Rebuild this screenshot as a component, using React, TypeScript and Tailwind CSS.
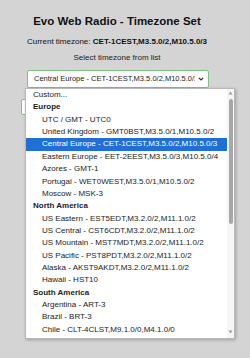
import React from 'react'

type Row = { label: string; kind: 'plain' | 'group' | 'opt'; selected?: boolean }

const rows: Row[] = [
  { label: 'Custom...', kind: 'plain' },
  { label: 'Europe', kind: 'group' },
  { label: 'UTC / GMT - UTC0', kind: 'opt' },
  { label: 'United Kingdom - GMT0BST,M3.5.0/1,M10.5.0/2', kind: 'opt' },
  { label: 'Central Europe - CET-1CEST,M3.5.0/2,M10.5.0/3', kind: 'opt', selected: true },
  { label: 'Eastern Europe - EET-2EEST,M3.5.0/3,M10.5.0/4', kind: 'opt' },
  { label: 'Azores - GMT-1', kind: 'opt' },
  { label: 'Portugal - WET0WEST,M3.5.0/1,M10.5.0/2', kind: 'opt' },
  { label: 'Moscow - MSK-3', kind: 'opt' },
  { label: 'North America', kind: 'group' },
  { label: 'US Eastern - EST5EDT,M3.2.0/2,M11.1.0/2', kind: 'opt' },
  { label: 'US Central - CST6CDT,M3.2.0/2,M11.1.0/2', kind: 'opt' },
  { label: 'US Mountain - MST7MDT,M3.2.0/2,M11.1.0/2', kind: 'opt' },
  { label: 'US Pacific - PST8PDT,M3.2.0/2,M11.1.0/2', kind: 'opt' },
  { label: 'Alaska - AKST9AKDT,M3.2.0/2,M11.1.0/2', kind: 'opt' },
  { label: 'Hawaii - HST10', kind: 'opt' },
  { label: 'South America', kind: 'group' },
  { label: 'Argentina - ART-3', kind: 'opt' },
  { label: 'Brazil - BRT-3', kind: 'opt' },
  { label: 'Chile - CLT-4CLST,M9.1.0/0,M4.1.0/0', kind: 'opt' },
]

function DropdownList() {
  return (
    <div className="absolute left-[25px] top-[88px] w-[210px] h-[251px] bg-white border border-[#b8b8b8] shadow-[1px_1px_3px_rgba(0,0,0,0.25)] overflow-hidden">
      <div className="flex flex-col">
        {rows.map((r, i) => (
          <div
            key={i}
            className={
              'h-[12.37px] leading-[12.37px] whitespace-nowrap text-[8px] mr-[7px] ' +
              (r.kind === 'group' ? 'font-bold pl-[7px] ' : r.kind === 'opt' ? 'pl-[16px] ' : 'pl-[7px] ') +
              (r.selected ? 'bg-[#1f6fd6] text-white' : 'text-[#222]')
            }
          >
            {r.label}
          </div>
        ))}
      </div>
      {/* scrollbar */}
      <div className="absolute right-0 top-0 bottom-0 w-[7px] bg-[#f6f6f6] flex flex-col items-center">
        <svg width="5" height="4" viewBox="0 0 5 4" className="mt-[2px]">
          <path d="M2.5 0.5 L4.5 3.5 L0.5 3.5 Z" fill="#9a9a9a" />
        </svg>
        <div className="mt-[4px] w-[4px] h-[125px] rounded-[2px] bg-[#a8a8a8]" />
        <div className="flex-1" />
        <svg width="5" height="4" viewBox="0 0 5 4" className="mb-[4px]">
          <path d="M0.5 0.5 L4.5 0.5 L2.5 3.5 Z" fill="#9a9a9a" />
        </svg>
      </div>
    </div>
  )
}

export default function App() {
  return (
    <div
      className="relative w-[250px] h-[358px] bg-[#d4d4d4] overflow-hidden text-[#111]"
      style={{ fontFamily: '"Liberation Sans", Arial, sans-serif' }}
    >
      <div className="w-[234px] flex flex-col items-center pt-[14px]">
        <h1 className="text-[11.5px] leading-[14px] font-bold">Evo Web Radio - Timezone Set</h1>
        <p className="mt-[9px] text-[8px] leading-[10px] whitespace-nowrap">
          Current timezone: <span className="font-bold">CET-1CEST,M3.5.0/2,M10.5.0/3</span>
        </p>
        <p className="mt-[6px] text-[8px] leading-[10px] text-[#222]">Select timezone from list</p>
        <div className="mt-[7px] ml-[2px] w-[182px] h-[18px] bg-white border border-[#7cc47f] rounded-[2px] flex items-center pl-[6px] pr-[4px]">
          <span className="w-[161px] overflow-hidden whitespace-nowrap text-[7.5px] text-[#222]">
            Central Europe - CET-1CEST,M3.5.0/2,M10.5.0/3
          </span>
          <div className="flex-1" />
          <svg width="6" height="4" viewBox="0 0 6 4" className="shrink-0">
            <path d="M0.8 0.8 L3 3 L5.2 0.8" fill="none" stroke="#333" strokeWidth="1.2" />
          </svg>
        </div>
        <div className="mt-[11px] w-[192px] h-[16px] bg-white border border-[#7cc47f] rounded-[2px]" />
      </div>
      <DropdownList />
    </div>
  )
}
